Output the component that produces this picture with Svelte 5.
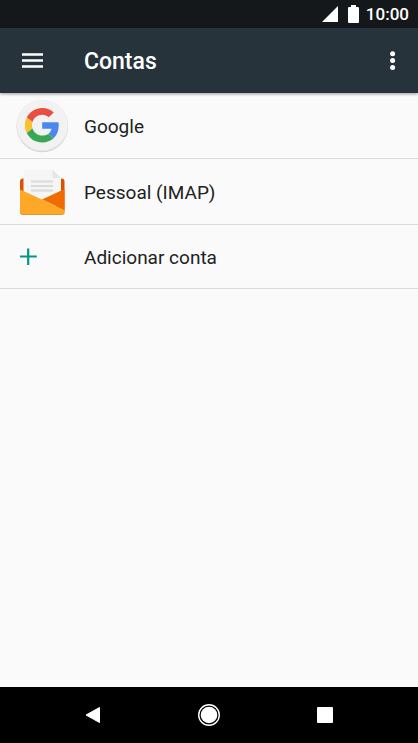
<script>
const accounts = [
    { name: 'Google', icon: 'google' },
    { name: 'Pessoal (IMAP)', icon: 'mail' }
]
</script>

<div class="screen">
    <div class="status">
        <svg width="16" height="16" viewBox="0 0 16 16" aria-hidden="true">
            <path d="M16 0v16H0z" fill="#fff" />
        </svg>
        <svg class="battery" width="11" height="18" viewBox="0 0 11 18" aria-hidden="true">
            <path d="M3 0h5v2h2q1 0 1 1v14q0 1-1 1H1q-1 0-1-1V3q0-1 1-1h2z" fill="#fff" />
        </svg>
        <span>10:00</span>
    </div>

    <header>
        <button class="menu" aria-label="Menu">
            <svg width="22" height="16" viewBox="0 0 22 16">
                <path d="M0 1.500h21M0 7.500h21M0 13.500h21" stroke="#fff" stroke-width="2.500" />
            </svg>
        </button>
        <h1 class="label">Contas</h1>
        <button class="more" aria-label="Mais opções">
            <svg width="6" height="20" viewBox="0 0 6 20">
                <circle cx="2.600" cy="2.700" r="2.500" fill="#fff" />
                <circle cx="2.600" cy="9.500" r="2.500" fill="#fff" />
                <circle cx="2.600" cy="16.500" r="2.500" fill="#fff" />
            </svg>
        </button>
    </header>

    <main>
        {#each accounts as account}
            <button class="row">
                <span class="icon">
                    {#if account.icon === 'google'}
                        <svg width="52" height="56" viewBox="0 0 52 56">
                            <circle cx="26.3" cy="28.5" r="25.7" fill="#cfcfcf" />
                            <circle cx="26.3" cy="27.7" r="25.8" fill="#e4e4e4" />
                            <circle cx="26.3" cy="27.2" r="25.3" fill="#f2f2f2" />
                            <g transform="translate(8.900 9.900) scale(.72)">
                                <path fill="#ea4e40" d="M24 9.5c3.54 0 6.71 1.22 9.21 3.6l6.85-6.85C35.9 2.38 30.47 0 24 0 14.62 0 6.51 5.38 2.56 13.22l7.98 6.19C12.43 13.72 17.74 9.5 24 9.5z" />
                                <path fill="#4a88ee" d="M46.98 24.55c0-1.57-.15-3.09-.38-4.55H24v9.02h12.94c-.58 2.96-2.26 5.48-4.78 7.18l7.73 6c4.51-4.18 7.09-10.36 7.09-17.65z" />
                                <path fill="#fbc02d" d="M10.53 28.59c-.48-1.45-.76-2.99-.76-4.59s.27-3.14.76-4.59l-7.98-6.19C.92 16.46 0 20.12 0 24c0 3.88.92 7.54 2.56 10.78l7.97-6.19z" />
                                <path fill="#3aa757" d="M24 48c6.48 0 11.93-2.13 15.89-5.81l-7.73-6c-2.15 1.45-4.92 2.3-8.16 2.3-6.26 0-11.57-4.22-13.47-9.91l-7.98 6.19C6.51 42.62 14.62 48 24 48z" />
                            </g>
                        </svg>
                    {:else}
                        <svg width="52" height="48" viewBox="0 0 52 48">
                            <rect x="4" y="10.500" width="44.500" height="35" rx="3" fill="#dc5000" />
                            <path d="M7.500 3q0-1.500 1.500-1.500h27.500l8.500 8.500v28h-37.500z" fill="#f5f5f5" />
                            <path d="M36.500 1.500l8.500 8.500h-7q-1.500 0-1.500-1.500z" fill="#e6e6e6" />
                            <path d="M15 13.500h22M15 18h22M15 22.500h22" stroke="#dadada" stroke-width="2" />
                            <path d="M48.500 21v21L26 31.500z" fill="#ef6c00" />
                            <path d="M4 45v.500q1 1.500 3 1.500h38.500q2 0 3-1.500v-2z" fill="#e09a35" />
                            <path d="M4 21.500l22 10 22.500 10.500v1q0 3-3 3H7q-3 0-3-3z" fill="#ffa726" />
                        </svg>
                    {/if}
                </span>
                <span class="label">{account.name}</span>
            </button>
        {/each}
        <button class="row add">
            <span class="icon">
                <svg width="18" height="18" viewBox="0 0 18 18">
                    <path d="M9.200 .5v16.500M1 8.500h16.800" stroke="#009688" stroke-width="2.200" />
                </svg>
            </span>
            <span class="label">Adicionar conta</span>
        </button>
    </main>

    <nav>
        <button aria-label="Voltar">
            <svg width="24" height="24" viewBox="0 0 24 24">
                <path d="M5 12L18.500 4.500v15z" fill="#fff" stroke="#fff" stroke-linejoin="round" />
            </svg>
        </button>
        <button aria-label="Início">
            <svg width="24" height="24" viewBox="0 0 24 24">
                <circle cx="12" cy="12" r="10.300" fill="none" stroke="#fff" stroke-width="1.400" />
                <circle cx="12" cy="12" r="8.300" fill="#fff" />
            </svg>
        </button>
        <button aria-label="Recentes">
            <svg width="24" height="24" viewBox="0 0 24 24">
                <rect x="4" y="4" width="16" height="16" rx="1" fill="#fff" />
            </svg>
        </button>
    </nav>
</div>

<style>
    :global(body) {
        margin: 0;
        background: #fafafa;
    }
    .screen {
        display: flex;
        flex-direction: column;
        min-height: 100vh;
        font-family: Roboto, sans-serif;
        color: #212121;
        background: #fafafa;
    }
    button {
        margin: 0;
        padding: 0;
        border: 0;
        background: none;
        font: inherit;
        color: inherit;
        cursor: pointer;
    }
    svg {
        display: block;
    }
    .status {
        display: flex;
        align-items: center;
        justify-content: flex-end;
        height: 28px;
        padding-right: 9px;
        background: #14181a;
        color: #fff;
        font-size: 17px;
        font-weight: 500;
    }
    .battery {
        margin: 0 7px 0 10px;
    }
    header {
        display: flex;
        align-items: center;
        height: 65px;
        padding: 0 12px 0 16px;
        background: #27333a;
        color: #fff;
        box-shadow: 0 1px 3px rgba(0, 0, 0, 0.4);
        z-index: 1;
    }
    .menu {
        width: 52px;
        padding: 12px 6px;
        margin-right: 16px;
    }
    h1 {
        flex: 1;
        margin: 0;
        font-size: 23px;
        font-weight: 500;
    }
    .label {
        padding-top: 2px;
    }
    .more {
        padding: 10px;
    }
    main {
        flex: 1;
    }
    .row {
        display: flex;
        align-items: center;
        gap: 16px;
        box-sizing: border-box;
        width: 100%;
        height: 66px;
        padding: 0 16px;
        border-bottom: 1px solid #dcdcdc;
        font-size: 19px;
        text-align: left;
    }
    .icon {
        width: 52px;
    }
    .add {
        height: 64px;
    }
    .add .icon {
        box-sizing: border-box;
        padding-left: 3px;
    }
    nav {
        display: flex;
        align-items: center;
        justify-content: center;
        gap: 68px;
        height: 56px;
        background: #000;
    }
    nav button {
        padding: 12px;
    }
</style>
